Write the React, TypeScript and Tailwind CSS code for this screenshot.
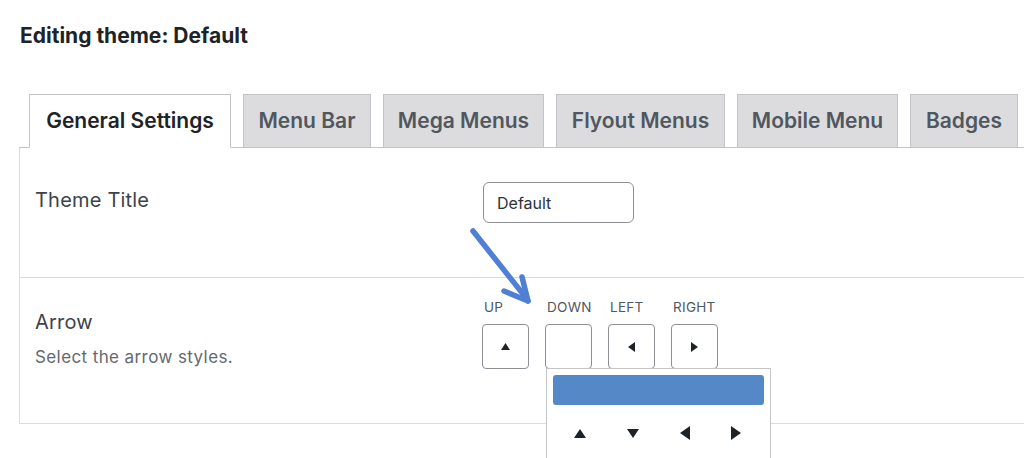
import React from 'react';

const tabs = [
  { label: 'General Settings', w: 'w-[202px]', active: true },
  { label: 'Menu Bar', w: 'w-[128px]' },
  { label: 'Mega Menus', w: 'w-[161px]' },
  { label: 'Flyout Menus', w: 'w-[169px]' },
  { label: 'Mobile Menu', w: 'w-[161px]' },
  { label: 'Badges', w: 'w-[108px]' },
];

type Dir = 'up' | 'down' | 'left' | 'right';

// small filled triangle, w/h given in px
const Tri = ({ dir, w, h }: { dir: Dir; w: number; h: number }) => {
  const pts: Record<Dir, string> = {
    up: `0,${h} ${w / 2},0 ${w},${h}`,
    down: `0,0 ${w},0 ${w / 2},${h}`,
    left: `${w},0 ${w},${h} 0,${h / 2}`,
    right: `0,0 0,${h} ${w},${h / 2}`,
  };
  return (
    <svg width={w} height={h} viewBox={`0 0 ${w} ${h}`} className="shrink-0 fill-[#1d2327]">
      <polygon points={pts[dir]} />
    </svg>
  );
};

const ArrowPicker = ({ label, dir }: { label: string; dir?: Dir }) => (
  <div className="flex w-[47px] flex-col">
    <span className="pl-[2px] text-[13.5px] leading-[18px] tracking-[0.3px] text-[#50575e]">{label}</span>
    <div className="mt-[8px] flex h-[45px] w-[47px] items-center justify-center rounded-[4px] border border-[#8c8f94] bg-white">
      {dir === 'up' && <Tri dir="up" w={9} h={7} />}
      {(dir === 'left' || dir === 'right') && <Tri dir={dir} w={7} h={10} />}
    </div>
  </div>
);

export default function App() {
  return (
    <div className="relative h-[458px] w-[1024px] overflow-hidden bg-white font-['Inter','Noto_Sans',sans-serif] text-[#1d2327]">
      <h1 className="pl-[20px] pt-[22px] text-[21px] font-bold leading-[28px]">Editing theme: Default</h1>

      <div className="ml-[19px] mt-[44px]">
        <div className="flex items-end gap-[12px] border-b border-[#c3c4c7] pl-[10px]">
          {tabs.map((t) => (
            <div
              key={t.label}
              className={`-mb-px flex h-[54px] shrink-0 ${t.w} items-center justify-center border border-[#c3c4c7] text-[21px] font-semibold ${
                t.active ? 'border-b-white bg-white text-[#1d2327]' : 'bg-[#dcdcde] text-[#50575e]'
              }`}
            >
              {t.label}
            </div>
          ))}
        </div>

        <div className="border-l border-[#dcdcde]">
          <div className="flex h-[130px] border-b border-[#dcdcde]">
            <div className="w-[463px] pl-[15px] pt-[39px] text-[20px] leading-[26px] tracking-[0.2px] text-[#3c434a]">Theme Title</div>
            <div className="pt-[34px]">
              <div className="flex h-[41px] w-[151px] items-center rounded-[6px] border border-[#8c8f94] px-[13px] text-[16px] text-[#2c3338]">
                Default
              </div>
            </div>
          </div>

          <div className="flex h-[146px] border-b border-[#dcdcde]">
            <div className="w-[462px] pl-[15px] pt-[31px]">
              <div className="text-[20px] leading-[26px] tracking-[0.2px] text-[#3c434a]">Arrow</div>
              <div className="mt-[11px] text-[17px] leading-[22px] tracking-[0.4px] text-[#646970]">Select the arrow styles.</div>
            </div>
            <div className="relative pt-[20px]">
              <div className="flex gap-[16px]">
                <ArrowPicker label="UP" dir="up" />
                <ArrowPicker label="DOWN" />
                <ArrowPicker label="LEFT" dir="left" />
                <ArrowPicker label="RIGHT" dir="right" />
              </div>
              <div className="absolute left-[64px] top-[90px] h-[120px] w-[225px] border border-[#c3c4c7] bg-white px-[6px] pt-[6px]">
                <div className="h-[30px] rounded-[3px] bg-[#5488c6]" />
                <div className="flex h-[14px] items-center gap-[41px] pl-[21px] mt-[21px]">
                  <Tri dir="up" w={12} h={9} />
                  <Tri dir="down" w={12} h={9} />
                  <Tri dir="left" w={10} h={14} />
                  <Tri dir="right" w={10} h={14} />
                </div>
              </div>
            </div>
          </div>
        </div>
      </div>

      <svg className="pointer-events-none absolute left-0 top-0" width="1024" height="458">
        <g stroke="#4f80d3" strokeWidth="5.5" strokeLinecap="round" fill="none">
          <line x1="473" y1="231" x2="527" y2="299" />
          <line x1="528" y1="301" x2="522" y2="277" />
          <line x1="528" y1="301" x2="504" y2="291" />
        </g>
      </svg>
    </div>
  );
}
